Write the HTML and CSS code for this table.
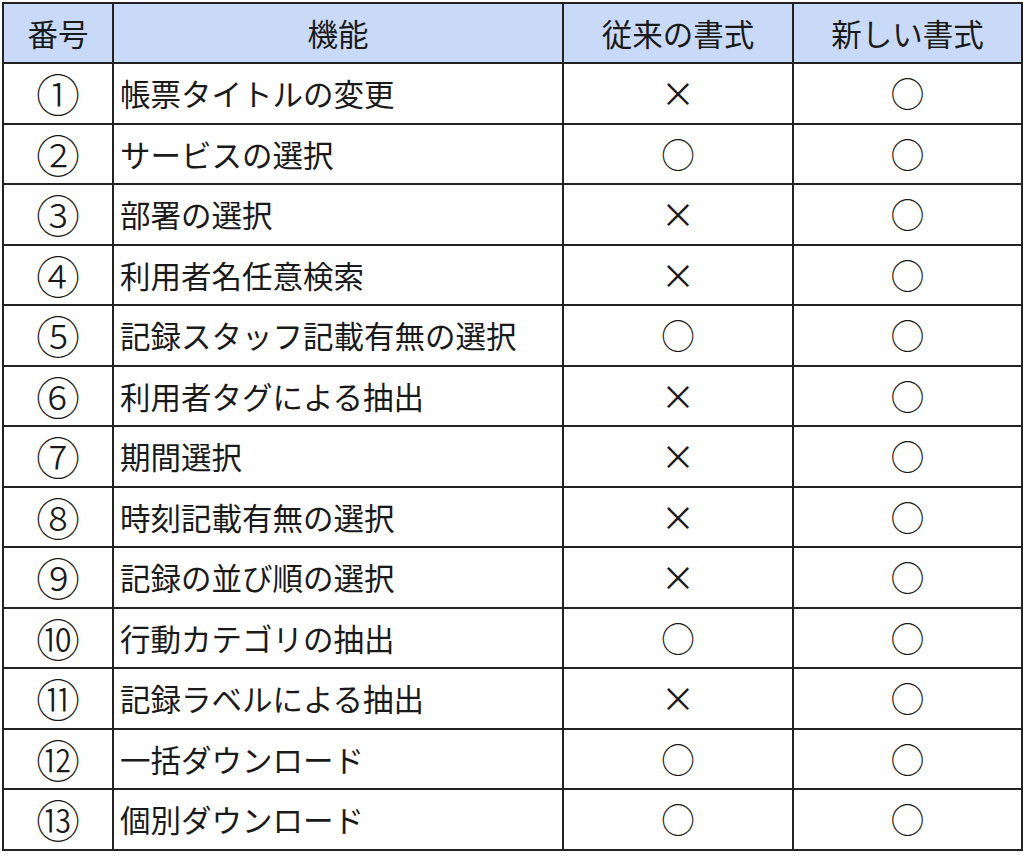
FILE: index.html
```html
<!DOCTYPE html>
<html lang="ja">
<head>
<meta charset="utf-8">
<link rel="stylesheet" href="styles.css">
</head>
<body>
<table class="grid">
  <colgroup>
    <col class="c-no"><col class="c-fn"><col class="c-old"><col class="c-new">
  </colgroup>
  <thead>
    <tr><th>番号</th><th>機能</th><th>従来の書式</th><th>新しい書式</th></tr>
  </thead>
  <tbody>
    <tr><td class="no">①</td><td class="fn">帳票タイトルの変更</td><td class="mk x">×</td><td class="mk">○</td></tr>
    <tr><td class="no">②</td><td class="fn">サービスの選択</td><td class="mk">○</td><td class="mk">○</td></tr>
    <tr><td class="no">③</td><td class="fn">部署の選択</td><td class="mk x">×</td><td class="mk">○</td></tr>
    <tr><td class="no">④</td><td class="fn">利用者名任意検索</td><td class="mk x">×</td><td class="mk">○</td></tr>
    <tr><td class="no">⑤</td><td class="fn">記録スタッフ記載有無の選択</td><td class="mk">○</td><td class="mk">○</td></tr>
    <tr><td class="no">⑥</td><td class="fn">利用者タグによる抽出</td><td class="mk x">×</td><td class="mk">○</td></tr>
    <tr><td class="no">⑦</td><td class="fn">期間選択</td><td class="mk x">×</td><td class="mk">○</td></tr>
    <tr><td class="no">⑧</td><td class="fn">時刻記載有無の選択</td><td class="mk x">×</td><td class="mk">○</td></tr>
    <tr><td class="no">⑨</td><td class="fn">記録の並び順の選択</td><td class="mk x">×</td><td class="mk">○</td></tr>
    <tr><td class="no">⑩</td><td class="fn">行動カテゴリの抽出</td><td class="mk">○</td><td class="mk">○</td></tr>
    <tr><td class="no">⑪</td><td class="fn">記録ラベルによる抽出</td><td class="mk x">×</td><td class="mk">○</td></tr>
    <tr><td class="no">⑫</td><td class="fn">一括ダウンロード</td><td class="mk">○</td><td class="mk">○</td></tr>
    <tr><td class="no">⑬</td><td class="fn">個別ダウンロード</td><td class="mk">○</td><td class="mk">○</td></tr>
  </tbody>
</table>
</body>
</html>
```
FILE: styles.css
```css
html, body {
  margin: 0;
  padding: 0;
  background: #ffffff;
}
body {
  padding: 2px 0 0 2px;
  font-family: "Noto Sans CJK JP", "Noto Sans", sans-serif;
  color: #1a1a1a;
}
.grid {
  border-collapse: collapse;
  table-layout: fixed;
  width: 1019px;
}
.c-no { width: 110px; }
.c-fn { width: 450px; }
.c-old { width: 230px; }
.c-new { width: 229px; }
.grid th, .grid td {
  border: 2px solid #222222;
  height: 58.5px;
  padding: 0;
  font-size: 30.5px;
  font-weight: 400;
  line-height: 1;
  vertical-align: middle;
}
.grid th {
  background: #c9daf8;
  text-align: center;
  height: 58px;
}
.grid td.no {
  text-align: center;
  font-size: 44px;
  font-weight: 200;
}
.grid td.fn { text-align: left; padding-left: 6px; }
.grid td.mk {
  text-align: center;
  font-size: 34px;
  font-weight: 300;
}
.grid td.mk.x {
  font-weight: 400;
}
```
